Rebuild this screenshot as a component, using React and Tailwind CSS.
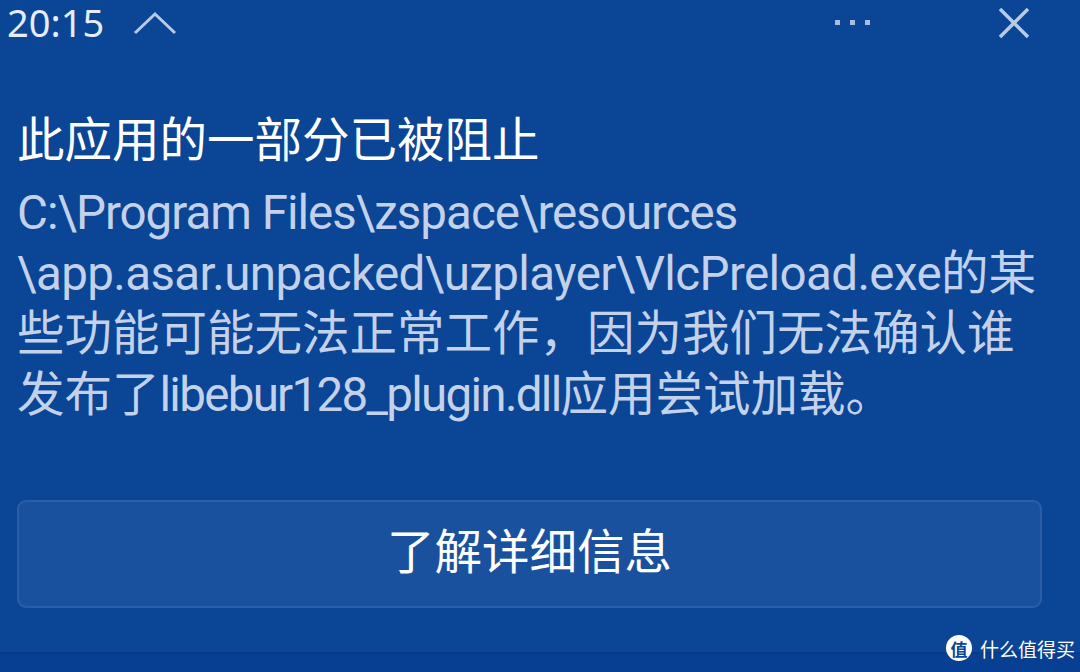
import React from 'react';

const font = { fontFamily: '"Noto Sans", "Noto Sans CJK SC", sans-serif' };
const bodyFont = { fontFamily: 'Roboto, "Noto Sans CJK SC", sans-serif' };
const cjkFont = { fontFamily: '"Noto Sans CJK SC", sans-serif' };

export default function App() {
  return (
    <div
      className="relative flex h-[672px] w-[1080px] flex-col overflow-hidden bg-[#0a4596]"
      style={font}
    >
      {/* title bar */}
      <div className="flex h-[45px] items-center">
        <span className="ml-[7px] text-[38px] leading-[45px] text-[#e6edf8]">20:15</span>
        <svg className="ml-[29px]" width="44" height="26" viewBox="0 0 44 26">
          <path d="M2 23 L22 4 L42 23" fill="none" stroke="#b9cae6" strokeWidth="3" />
        </svg>
        <div className="ml-auto flex gap-[10px]">
          <span className="h-[5px] w-[5px] bg-[#a9bedf]" />
          <span className="h-[5px] w-[5px] bg-[#a9bedf]" />
          <span className="h-[5px] w-[5px] bg-[#a9bedf]" />
        </div>
        <svg className="ml-[128px] mr-[50px]" width="32" height="32" viewBox="0 0 32 32">
          <path d="M2 2 L30 30 M30 2 L2 30" stroke="#b9cae6" strokeWidth="3.5" />
        </svg>
      </div>

      <div className="px-[17px] pt-[66px]" style={bodyFont}>
        <h1 className="text-[47.5px] font-normal leading-[60px] text-white">此应用的一部分已被阻止</h1>
        <div className="mt-3 whitespace-nowrap text-[47.5px] leading-[60.5px] text-[#c3d2ea]">
          <div className="tracking-[-1px]">C:\Program Files\zspace\resources</div>
          <div>
            <span className="tracking-[-0.6px]">\app.asar.unpacked\uzplayer\VlcPreload.exe</span>的某
          </div>
          <div>些功能可能无法正常工作，因为我们无法确认谁</div>
          <div>
            发布了<span className="tracking-[-1.7px]">libebur128_plugin.dll</span>应用尝试加载。
          </div>
        </div>
        <button className="mt-[75px] flex h-[108px] w-[1025px] items-center justify-center rounded-[9px] border-2 border-[#2c5ea8] bg-[#1a519f] text-[47.5px] text-white">
          了解详细信息
        </button>
      </div>

      <div className="mt-auto h-[20px] border-t-2 border-[#083a86] bg-[#073f92]" />

      {/* watermark */}
      <div className="absolute bottom-[11px] right-[5px] flex items-center gap-[8px]" style={cjkFont}>
        <span className="flex h-[26px] w-[26px] items-center justify-center rounded-full bg-white text-[17px] font-bold leading-none text-[#0a4596]">
          值
        </span>
        <span className="text-[19px] leading-none text-white">什么值得买</span>
      </div>
    </div>
  );
}
